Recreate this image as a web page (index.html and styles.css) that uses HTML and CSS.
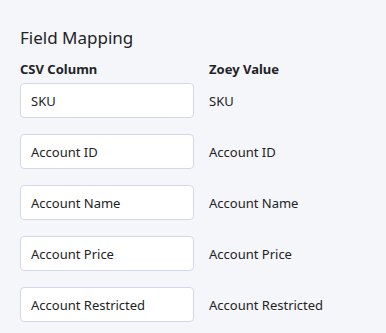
FILE: index.html
```html
<!DOCTYPE html>
<html lang="en">
<head>
    <meta charset="UTF-8">
    <title>Field Mapping</title>
    <link rel="stylesheet" href="styles.css">
</head>
<body>
    <div class="mapping">
        <h2>Field Mapping</h2>
        <div class="mapping-grid">
            <div class="col-head">CSV Column</div>
            <div class="col-head">Zoey Value</div>

            <input type="text" value="SKU">
            <div class="value">SKU</div>

            <input type="text" value="Account ID">
            <div class="value">Account ID</div>

            <input type="text" value="Account Name">
            <div class="value">Account Name</div>

            <input type="text" value="Account Price">
            <div class="value">Account Price</div>

            <input type="text" value="Account Restricted">
            <div class="value">Account Restricted</div>
        </div>
    </div>
</body>
</html>
```

FILE: styles.css
```css
body {
    margin: 0;
    background-color: #f5f6f9;
    font-family: "Noto Sans", "Open Sans", sans-serif;
    color: #222326;
}
.mapping {
    padding: 26px 20px 20px;
}
h2 {
    margin: 0 0 10px;
    font-size: 17px;
    font-weight: 400;
    line-height: 24px;
}
.mapping-grid {
    display: grid;
    grid-template-columns: 174px 1fr;
    column-gap: 15px;
    row-gap: 16px;
    align-items: center;
}
.col-head {
    font-size: 13px;
    font-weight: 700;
    line-height: 18px;
    margin-bottom: -11px;
}
input {
    box-sizing: border-box;
    width: 100%;
    height: 35px;
    padding: 0 10px;
    border: 1px solid #d4d7eb;
    border-radius: 4px;
    background: #fff;
    font-family: inherit;
    font-size: 13px;
    color: #222326;
}
.value {
    font-size: 13px;
}
```
